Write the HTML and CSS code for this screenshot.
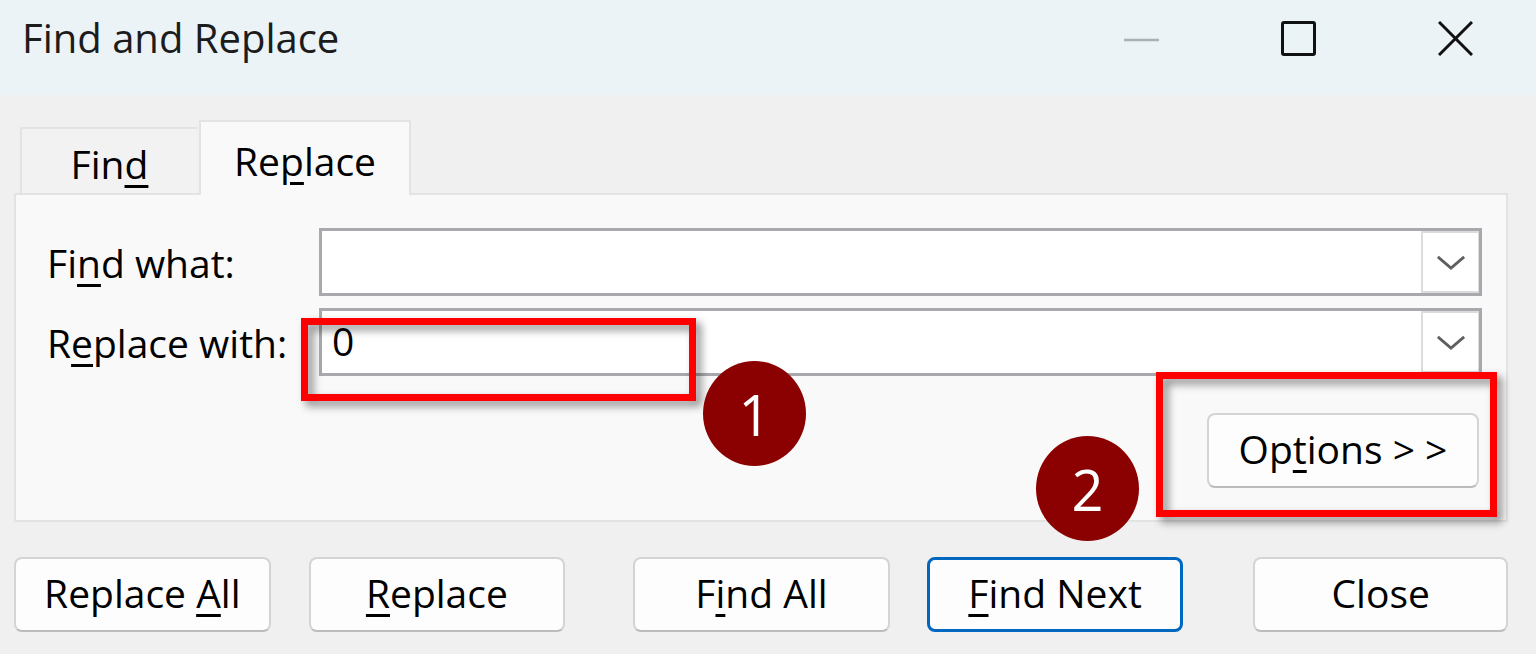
FILE: index.html
```html
<!DOCTYPE html>
<html lang="en">

<head>
      <meta charset="UTF-8">
      <meta name="viewport" content="width=device-width, initial-scale=1.0">
      <title>Find and Replace</title>
      <link rel="stylesheet" href="styles.css">
</head>

<body>
      <div class="window">
            <header class="titlebar">
                  <span class="title">Find and Replace</span>
                  <div class="controls">
                        <svg class="ctl" viewBox="0 0 35 35" width="35" height="35">
                              <line x1="0" y1="19" x2="35" y2="19" stroke="#a9b0b4" stroke-width="2.5" />
                        </svg>
                        <svg class="ctl" viewBox="0 0 35 35" width="35" height="35">
                              <rect x="1.5" y="1.5" width="32" height="32" rx="1.5" fill="none" stroke="#111" stroke-width="3" />
                        </svg>
                        <svg class="ctl" viewBox="0 0 35 35" width="35" height="35">
                              <path d="M1 1 L34 34 M34 1 L1 34" stroke="#111" stroke-width="3" />
                        </svg>
                  </div>
            </header>

            <main class="dialog">
                  <div class="tabs">
                        <div class="tab">Fin<u>d</u></div>
                        <div class="tab active">Re<u>p</u>lace</div>
                  </div>

                  <section class="panel">
                        <div class="field">
                              <label for="findWhat">Fi<u>n</u>d what:</label>
                              <div class="combo">
                                    <input type="text" id="findWhat" value="">
                                    <span class="drop">
                                          <svg viewBox="0 0 32 16" width="30" height="15">
                                                <polyline points="2,2 16,14 30,2" fill="none" stroke="#606060" stroke-width="3" />
                                          </svg>
                                    </span>
                              </div>
                        </div>
                        <div class="field">
                              <label for="replaceWith">R<u>e</u>place with:</label>
                              <div class="combo">
                                    <input type="text" id="replaceWith" value="0">
                                    <span class="drop">
                                          <svg viewBox="0 0 32 16" width="30" height="15">
                                                <polyline points="2,2 16,14 30,2" fill="none" stroke="#606060" stroke-width="3" />
                                          </svg>
                                    </span>
                              </div>
                        </div>
                        <div class="options-row">
                              <button class="btn options">Op<u>t</u>ions &gt; &gt;</button>
                        </div>
                  </section>

                  <div class="actions">
                        <button class="btn">Replace <u>A</u>ll</button>
                        <button class="btn">
                              <u>R</u>eplace</button>
                        <button class="btn wide-gap">F<u>i</u>nd All</button>
                        <button class="btn default">
                              <u>F</u>ind Next</button>
                        <button class="btn close">Close</button>
                  </div>
            </main>

            <!-- annotation marks over the dialog -->
            <div class="mark mark-replace"></div>
            <div class="mark mark-options"></div>
            <div class="badge badge-one">1</div>
            <div class="badge badge-two">2</div>
      </div>
</body>

</html>
```

FILE: styles.css
```css
body {
      margin: 0;
      font-family: "Open Sans", "Noto Sans", sans-serif;
      background-color: #f0f0f0;
      color: #000;
}

.window {
      position: relative;
      width: 1536px;
      height: 654px;
      overflow: hidden;
}

.titlebar {
      height: 95px;
      background-color: #ecf3f7;
      display: flex;
      justify-content: space-between;
      align-items: flex-start;
}

.title {
      font-size: 40px;
      line-height: 54px;
      padding: 11px 0 0 22px;
      color: #1c1c1c;
}

.controls {
      display: flex;
      gap: 122px;
      padding: 21px 63px 0 0;
}

.ctl {
      display: block;
}

.dialog {
      padding: 25px 28px 0 14px;
}

.tabs {
      display: flex;
      align-items: flex-end;
      margin: 0 0 -2px 6px;
      position: relative;
      z-index: 1;
}

.tab {
      box-sizing: border-box;
      width: 177px;
      height: 66px;
      margin-bottom: 2px;
      padding-top: 5px;
      border: 2px solid #e3e3e3;
      border-bottom: none;
      border-right: none;
      background-color: #f2f2f2;
      font-size: 39px;
      display: flex;
      justify-content: center;
      align-items: center;
}

.tab.active {
      width: 212px;
      height: 75px;
      margin: 0 0 0 2px;
      padding-top: 3px;
      border-right: 2px solid #e3e3e3;
      background-color: #f9f9f9;
}

u {
      text-decoration-thickness: 3px;
      text-underline-offset: 6px;
}

.panel {
      box-sizing: border-box;
      height: 329px;
      border: 2px solid #e3e3e3;
      background-color: #f9f9f9;
      padding: 33px 24px 0 31px;
}

.field {
      display: flex;
      align-items: center;
      height: 68px;
}

.field + .field {
      margin-top: 12px;
}

label {
      width: 272px;
      font-size: 39px;
      flex-shrink: 0;
}

.combo {
      flex: 1;
      box-sizing: border-box;
      height: 68px;
      border: 3px solid #a9a9ad;
      background-color: #fff;
      display: flex;
}

.combo input {
      flex: 1;
      min-width: 0;
      border: none;
      outline: none;
      background: transparent;
      font-family: inherit;
      font-size: 39px;
      color: #000;
      padding: 0 0 4px 10px;
}

.drop {
      box-sizing: border-box;
      width: 58px;
      height: 62px;
      border: 2px solid #dcdcdc;
      border-right-width: 1px;
      display: flex;
      justify-content: center;
      align-items: center;
}

.options-row {
      display: flex;
      justify-content: flex-end;
      margin-top: 37px;
      padding-right: 3px;
}

.btn {
      box-sizing: border-box;
      width: 257px;
      height: 75px;
      border: 2px solid #d4d4d4;
      border-bottom-color: #bcbcbc;
      border-radius: 8px;
      background-color: #fdfdfd;
      font-family: inherit;
      font-size: 39px;
      color: #000;
      padding: 0 0 4px;
}

.btn.options {
      width: 272px;
}

.actions {
      display: flex;
      margin-top: 35px;
}

.actions .btn + .btn {
      margin-left: 38px;
}

.actions .btn.wide-gap {
      margin-left: 68px;
}

.actions .btn.default {
      margin-left: 37px;
      border: 3px solid #0067c0;
}

.actions .btn.close {
      margin-left: 70px;
      width: 255px;
}

.mark {
      position: absolute;
      box-sizing: border-box;
      border: 7px solid #ff0000;
      filter: drop-shadow(5px 5px 4px rgba(0, 0, 0, 0.45));
}

.mark-replace {
      left: 301px;
      top: 318px;
      width: 395px;
      height: 83px;
}

.mark-options {
      left: 1156px;
      top: 372px;
      width: 341px;
      height: 145px;
}

.badge {
      position: absolute;
      width: 103px;
      height: 105px;
      border-radius: 50%;
      background-color: #8b0000;
      color: #fff;
      font-size: 56px;
      display: flex;
      justify-content: center;
      align-items: center;
}

.badge-one {
      left: 703px;
      top: 361px;
}

.badge-two {
      left: 1036px;
      top: 436px;
}
```
